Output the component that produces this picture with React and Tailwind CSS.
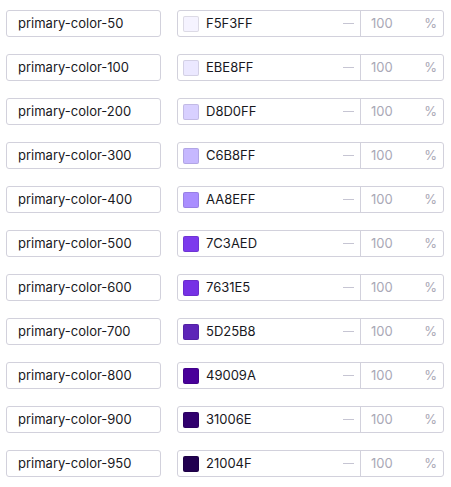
import React from "react"

const shades = [
  { name: "50", hex: "F5F3FF" },
  { name: "100", hex: "EBE8FF" },
  { name: "200", hex: "D8D0FF" },
  { name: "300", hex: "C6B8FF" },
  { name: "400", hex: "AA8EFF" },
  { name: "500", hex: "7C3AED" },
  { name: "600", hex: "7631E5" },
  { name: "700", hex: "5D25B8" },
  { name: "800", hex: "49009A" },
  { name: "900", hex: "31006E" },
  { name: "950", hex: "21004F" },
]

const ShadeRow = ({ shade }) => (
  <div className="flex items-center h-[27px]">
    <div className="w-[155px] h-full flex items-center pl-[11px] border border-[#d2d1dc] rounded-[3px] text-[13px] text-[#18181e]">
      primary-color-{shade.name}
    </div>
    <div className="ml-[16px] w-[267px] h-full flex border border-[#d2d1dc] rounded-[3px] text-[13px]">
      <div className="flex-1 flex items-center pl-[5px] pr-[6px]">
        <div
          className="w-[16px] h-[16px] rounded-[2px] border border-black/10"
          style={{ backgroundColor: `#${shade.hex}` }}
        />
        <span className="ml-[7px] text-[#18181e]">{shade.hex}</span>
        <span className="ml-auto w-[11px] h-[1.5px] bg-[#c6c5d3]" />
      </div>
      <div className="w-[83px] flex items-center justify-between pl-[10px] pr-[6px] border-l border-[#d2d1dc] text-[#a9a8b6]">
        <span>100</span>
        <span>%</span>
      </div>
    </div>
  </div>
)

export default function App() {
  return (
    <div className="bg-white min-h-screen pt-[10px] pl-[6px] flex flex-col gap-[17px] font-['Inter',sans-serif]">
      {shades.map((s) => (
        <ShadeRow key={s.name} shade={s} />
      ))}
    </div>
  )
}
